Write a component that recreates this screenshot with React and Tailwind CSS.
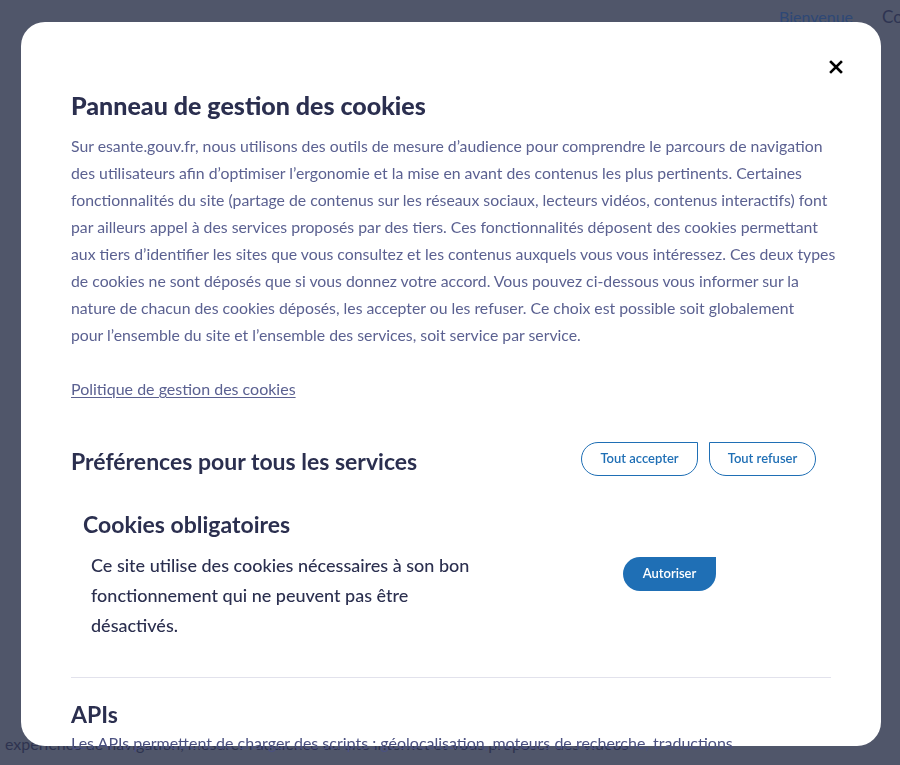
const bodyLines = [
  "Sur esante.gouv.fr, nous utilisons des outils de mesure d’audience pour comprendre le parcours de navigation",
  "des utilisateurs afin d’optimiser l’ergonomie et la mise en avant des contenus les plus pertinents. Certaines",
  "fonctionnalités du site (partage de contenus sur les réseaux sociaux, lecteurs vidéos, contenus interactifs) font",
  "par ailleurs appel à des services proposés par des tiers. Ces fonctionnalités déposent des cookies permettant",
  "aux tiers d’identifier les sites que vous consultez et les contenus auxquels vous vous intéressez. Ces deux types",
  "de cookies ne sont déposés que si vous donnez votre accord. Vous pouvez ci-dessous vous informer sur la",
  "nature de chacun des cookies déposés, les accepter ou les refuser. Ce choix est possible soit globalement",
  "pour l’ensemble du site et l’ensemble des services, soit service par service.",
];

function CloseIcon() {
  return (
    <svg width="14" height="14" viewBox="0 0 14 14" fill="none">
      <path d="M2 2L12 12M12 2L2 12" stroke="#000" strokeWidth="2.6" strokeLinecap="square" />
    </svg>
  );
}

function CookieModal() {
  return (
    <div className="fixed left-[21px] top-[22px] w-[860px] h-[724px] bg-white rounded-[24px] px-[50px] pt-[68px]">
      <button className="absolute top-[38px] right-[38px] p-0">
        <CloseIcon />
      </button>

      <h2 className="text-[25px] leading-[30px] font-black text-[#2b2f4f]">
        Panneau de gestion des cookies
      </h2>

      <p className="mt-[12px] text-[15.8px] leading-[27px] text-[#5b6191] whitespace-nowrap">
        {bodyLines.map((line) => (
          <span key={line} className="block">{line}</span>
        ))}
      </p>

      <a href="#" className="block mt-[27px] text-[16px] leading-[27px] text-[#5b6191] underline underline-offset-2">
        Politique de gestion des cookies
      </a>

      <div className="mt-[40px] flex items-center justify-between pr-[15px] h-[34px]">
        <h3 className="mt-[3px] text-[23px] leading-[28px] font-bold text-[#2b2f4f]">
          Préférences pour tous les services
        </h3>
        <div className="flex gap-[11px]">
          <button className="w-[117px] h-[34px] border border-[#1f6fb5] text-[#1f6fb5] text-[13px] font-semibold rounded-[17px] rounded-tr-none bg-white">
            Tout accepter
          </button>
          <button className="w-[107px] h-[34px] border border-[#1f6fb5] text-[#1f6fb5] text-[13px] font-semibold rounded-[17px] rounded-tl-none bg-white">
            Tout refuser
          </button>
        </div>
      </div>

      <h4 className="mt-[35px] pl-[12px] text-[23px] leading-[26px] font-bold text-[#2b2f4f]">
        Cookies obligatoires
      </h4>

      <div className="mt-[13px] pl-[20px] flex">
        <p className="w-[532px] text-[18px] leading-[30px] font-medium text-[#2b2f4f]">
          Ce site utilise des cookies nécessaires à son bon
          <br />
          fonctionnement qui ne peuvent pas être
          <br />
          désactivés.
        </p>
        <div className="pt-[7px]">
          <button className="w-[93px] h-[34px] bg-[#1f6fb5] text-white text-[13px] font-semibold rounded-[17px] rounded-tr-none">
            Autoriser
          </button>
        </div>
      </div>

      <div className="mt-[37px] h-px bg-[#e2e2ec]" />

      <h3 className="mt-[22px] text-[23px] leading-[28px] font-bold text-[#2b2f4f]">
        APIs
      </h3>
      <p className="mt-[1px] text-[16px] leading-[27px] text-[#4b5180] whitespace-nowrap">
        Les APIs permettent de charger des scripts : géolocalisation, moteurs de recherche, traductions
      </p>
    </div>
  );
}

export default function App() {
  return (
    <div className="relative h-[765px] overflow-hidden bg-[#50566a] font-['Lato','Noto_Sans',sans-serif]">
      <header className="flex justify-end gap-[30px] h-[34px] items-center whitespace-nowrap">
        <span className="text-[16px] text-[#2e4876] w-[73px]">Bienvenue</span>
        <span className="text-[17px] text-[#2e3452] w-[18px]">Co</span>
      </header>

      <div className="mt-[696px] px-[5px] text-[16px] leading-[27px] text-[#2e3350] whitespace-nowrap">
        <p>expérience de navigation, mesurer l’audience du site internet et vous proposer des vidéos</p>
        <p>ou des contenus de plateformes sociales et des contenus animés et interactifs. Pour en savoir plus</p>
      </div>

      <CookieModal />
    </div>
  );
}
